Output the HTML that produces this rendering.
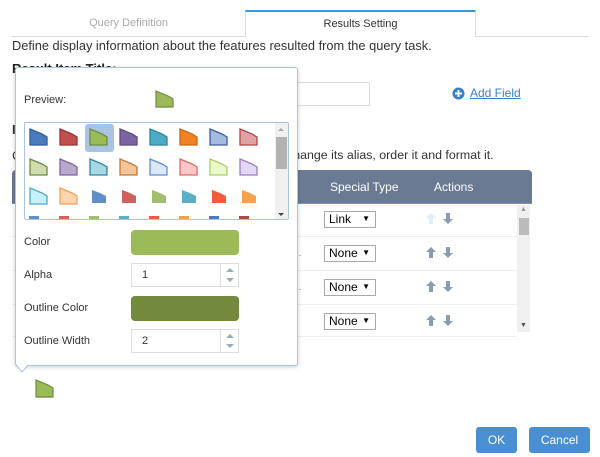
<!DOCTYPE html>
<html><head><meta charset="utf-8"><style>
*{box-sizing:border-box}
body{margin:0;width:600px;height:457px;background:#fff;font-family:"Liberation Sans",sans-serif;position:relative;overflow:hidden;color:#333}
.a{position:absolute}
.t{font-size:11px;color:#333}
.sel{position:absolute;width:52px;height:17px;border:1px solid #aaa;font-size:12px;padding:0 0 0 4px;background:#fff;color:#000}
.sel:after{content:"▼";position:absolute;right:5px;top:2px;font-size:8px}
.row{position:absolute;left:12px;width:505px;height:1px;background:#f0f0f0}
.spin{position:absolute;width:108px;height:24px;border:1px solid #ddd;background:#fff;font-size:11px;padding:5px 0 0 10px}
.spin i{position:absolute;right:0;top:0;width:18px;height:22px;border-left:1px solid #ddd}
.spin i:before{content:"";position:absolute;left:5px;top:4px;border:4px solid transparent;border-bottom:4px solid #9ab;border-top:0}
.spin i:after{content:"";position:absolute;left:5px;top:14px;border:4px solid transparent;border-top:4px solid #9ab;border-bottom:0}
</style></head><body>
<div class="a" style="left:12px;top:36px;width:233px;height:1px;background:#ddd"></div>
<div class="a" style="left:12px;top:17px;width:233px;text-align:center;font-size:11px;color:#aaa">Query Definition</div>
<div class="a" style="left:245px;top:10px;width:231px;height:27px;border-top:2px solid #3a9ad9;border-left:1px solid #ddd;border-right:1px solid #ddd;text-align:center;font-size:11px;color:#333;padding-top:6px">Results Setting</div>
<div class="a" style="left:476px;top:36px;width:112px;height:1px;background:#ddd"></div>
<div class="a" style="left:12px;top:38px;font-size:12.8px;color:#333">Define display information about the features resulted from the query task.</div>
<div class="a" style="left:12px;top:61px;font-size:13px;font-weight:bold;color:#222">Result Item Title:</div>
<div class="a" style="left:200px;top:82px;width:170px;height:24px;border:1px solid #ddd"></div>
<svg class="a" style="left:452px;top:87px" width="13" height="13"><circle cx="6.5" cy="6.5" r="6" fill="#3b7fcc"/><path d="M6.5 3v7M3 6.5h7" stroke="#fff" stroke-width="2"/></svg>
<div class="a" style="left:470px;top:86px;font-size:12px;color:#3b7fcc;text-decoration:underline">Add Field</div>
<div class="a" style="left:12px;top:122px;font-size:13px;font-weight:bold">I</div>
<div class="a" style="left:12px;top:148px;font-size:13px">C</div>
<div class="a" style="left:287px;top:148px;font-size:12.4px;color:#333">change its alias, order it and format it.</div>
<div class="a" style="left:12px;top:170px;width:520px;height:34px;background:#6b7a93;border-radius:4px 4px 0 0;border-bottom:1px solid #5aa0d8"></div>
<div class="a" style="left:330px;top:180px;font-size:12px;color:#fff">Special Type</div>
<div class="a" style="left:434px;top:180px;font-size:12px;color:#fff">Actions</div>
<div class="row" style="top:236px"></div><div class="row" style="top:270px"></div><div class="row" style="top:304px"></div><div class="row" style="top:336px"></div>
<div class="sel" style="left:324px;top:211px">Link</div>
<div class="sel" style="left:324px;top:245px">None</div>
<div class="sel" style="left:324px;top:279px">None</div>
<div class="sel" style="left:324px;top:313px">None</div>
<div class="a" style="left:296px;top:248px;font-size:10px;color:#888">..</div>
<div class="a" style="left:296px;top:282px;font-size:10px;color:#888">..</div>
<div class="a" style="left:296px;top:316px;font-size:10px;color:#888">.</div>
<svg class="a" style="left:425px;top:210px" width="30" height="120">
<g fill="#e4ecf4"><path d="M6 3l5 5h-3v6h-4v-6h-3z"/></g>
<g fill="#8a9bb4"><path d="M21 3h4v6h3l-5 5-5-5h3z"/>
<path d="M6 37l5 5h-3v6h-4v-6h-3z"/><path d="M21 37h4v6h3l-5 5-5-5h3z"/>
<path d="M6 71l5 5h-3v6h-4v-6h-3z"/><path d="M21 71h4v6h3l-5 5-5-5h3z"/>
<path d="M6 105l5 5h-3v6h-4v-6h-3z"/><path d="M21 105h4v6h3l-5 5-5-5h3z"/></g></svg>
<div class="a" style="left:517px;top:205px;width:13px;height:127px;background:#f0f0f0"></div>
<div class="a" style="left:519px;top:218px;width:10px;height:17px;background:#bbb"></div>
<div class="a" style="left:520px;top:206px;font-size:7px;color:#999">▲</div>
<div class="a" style="left:520px;top:322px;font-size:7px;color:#555">▼</div>
<svg class="a" style="left:35px;top:379px" width="20" height="19"><path d="M1 1L13 6L18 9L18 18L1 18Z" fill="#9bbb59" stroke="#6e8b3d" stroke-width="1.2"/></svg>
<div class="a" style="left:15px;top:67px;width:283px;height:299px;background:#fff;border:1px solid #a8c4e0;border-radius:3px;box-shadow:0 1px 4px rgba(0,0,0,.2)"></div>
<svg class="a" style="left:15px;top:364px" width="16" height="9"><path d="M1 1L7 8L13 1" fill="#fff" stroke="#a8c4e0"/></svg>
<div class="a t" style="left:24px;top:94px">Preview:</div>
<svg class="a" style="left:155px;top:90px" width="20" height="19"><path d="M1 1L13 6L18 9L18 17L1 17Z" fill="#9bbb59" stroke="#6e8b3d" stroke-width="1.2"/></svg>
<div class="a" style="left:24px;top:122px;width:265px;height:98px;border:1px solid #a8c4e0;border-radius:2px;overflow:hidden">
<svg width="265" height="98" style="position:absolute;left:0;top:0">
<rect x="60" y="1" width="29" height="28" rx="3" fill="#a8c4e0"/>
<g stroke-width="1.3">
<g transform="translate(4,5)">
<path d="M1 1L13 6L18 9L18 17L1 17Z" fill="#4a7bbd" stroke="#2f5e9e"/>
<path transform="translate(30,0)" d="M1 1L13 6L18 9L18 17L1 17Z" fill="#c0504d" stroke="#9b3432"/>
<path transform="translate(60,0)" d="M1 1L13 6L18 9L18 17L1 17Z" fill="#9bbb59" stroke="#6e8b3d"/>
<path transform="translate(90,0)" d="M1 1L13 6L18 9L18 17L1 17Z" fill="#8064a2" stroke="#60497b"/>
<path transform="translate(120,0)" d="M1 1L13 6L18 9L18 17L1 17Z" fill="#4bacc6" stroke="#31859c"/>
<path transform="translate(150,0)" d="M1 1L13 6L18 9L18 17L1 17Z" fill="#f08224" stroke="#c66a18"/>
<path transform="translate(180,0)" d="M1 1L13 6L18 9L18 17L1 17Z" fill="#a3bbe0" stroke="#3b5f9e"/>
<path transform="translate(210,0)" d="M1 1L13 6L18 9L18 17L1 17Z" fill="#dfa3a3" stroke="#b04848"/>
</g>
<g transform="translate(4,35)">
<path d="M1 1L13 6L18 9L18 17L1 17Z" fill="#cedcb0" stroke="#6e8b3d"/>
<path transform="translate(30,0)" d="M1 1L13 6L18 9L18 17L1 17Z" fill="#b8a8cc" stroke="#8064a2"/>
<path transform="translate(60,0)" d="M1 1L13 6L18 9L18 17L1 17Z" fill="#a8d8e6" stroke="#31859c"/>
<path transform="translate(90,0)" d="M1 1L13 6L18 9L18 17L1 17Z" fill="#f5c59a" stroke="#c07836"/>
<path transform="translate(120,0)" d="M1 1L13 6L18 9L18 17L1 17Z" fill="#dde8fb" stroke="#5b8fd9"/>
<path transform="translate(150,0)" d="M1 1L13 6L18 9L18 17L1 17Z" fill="#ffc8c8" stroke="#e06a6a"/>
<path transform="translate(180,0)" d="M1 1L13 6L18 9L18 17L1 17Z" fill="#eaf8cc" stroke="#a8d06a"/>
<path transform="translate(210,0)" d="M1 1L13 6L18 9L18 17L1 17Z" fill="#e3d8f3" stroke="#9a7cc6"/>
</g>
<g transform="translate(4,64)">
<path d="M1 1L13 6L18 9L18 17L1 17Z" fill="#c8f0fa" stroke="#4bacc6"/>
<path transform="translate(30,0)" d="M1 1L13 6L18 9L18 17L1 17Z" fill="#ffd5b0" stroke="#f5a050"/>
</g></g>
<g transform="translate(4,66)" stroke="none">
<path transform="translate(62,0)" d="M1 1L9 4L15 7L15 14L1 14Z" fill="#5f8fc9"/>
<path transform="translate(92,0)" d="M1 1L9 4L15 7L15 14L1 14Z" fill="#d06060"/>
<path transform="translate(122,0)" d="M1 1L9 4L15 7L15 14L1 14Z" fill="#a0bd70"/>
<path transform="translate(152,0)" d="M1 1L9 4L15 7L15 14L1 14Z" fill="#5aafc4"/>
<path transform="translate(182,0)" d="M1 1L9 4L15 7L15 14L1 14Z" fill="#f55a3a"/>
<path transform="translate(212,0)" d="M1 1L9 4L15 7L15 14L1 14Z" fill="#f8a050"/>
</g>
<g transform="translate(4,93)">
<rect x="0" y="0" width="10" height="5" fill="#5f8fc9"/><rect x="30" y="0" width="10" height="5" fill="#d06060"/><rect x="60" y="0" width="10" height="5" fill="#a0bd70"/><rect x="90" y="0" width="10" height="5" fill="#5aafc4"/><rect x="120" y="0" width="10" height="5" fill="#f55a3a"/><rect x="150" y="0" width="10" height="5" fill="#f8a050"/><rect x="180" y="0" width="10" height="5" fill="#4a7bbd"/><rect x="210" y="0" width="10" height="5" fill="#b04848"/>
</g>
<rect x="250" y="0" width="15" height="98" fill="#f0f0f0"/>
<rect x="251" y="14" width="11" height="32" fill="#b3b3b3"/>
<path d="M253 8l3-3 3 3z" fill="#aaa"/><path d="M253 90l3 3 3-3z" fill="#444"/>
</svg></div>
<div class="a t" style="left:24px;top:236px">Color</div>
<div class="a" style="left:131px;top:230px;width:108px;height:25px;background:#9bbb59;border-radius:4px"></div>
<div class="a t" style="left:24px;top:269px">Alpha</div>
<div class="spin" style="left:131px;top:263px">1<i></i></div>
<div class="a t" style="left:24px;top:302px">Outline Color</div>
<div class="a" style="left:131px;top:296px;width:108px;height:25px;background:#738a3d;border-radius:4px"></div>
<div class="a t" style="left:24px;top:335px">Outline Width</div>
<div class="spin" style="left:131px;top:329px">2<i></i></div>
<div class="a" style="left:476px;top:427px;width:41px;height:26px;background:#4a8fd4;border-radius:3px;color:#fff;font-size:12px;text-align:center;line-height:26px">OK</div>
<div class="a" style="left:529px;top:427px;width:61px;height:26px;background:#4a8fd4;border-radius:3px;color:#fff;font-size:12px;text-align:center;line-height:26px">Cancel</div>
</body></html>
